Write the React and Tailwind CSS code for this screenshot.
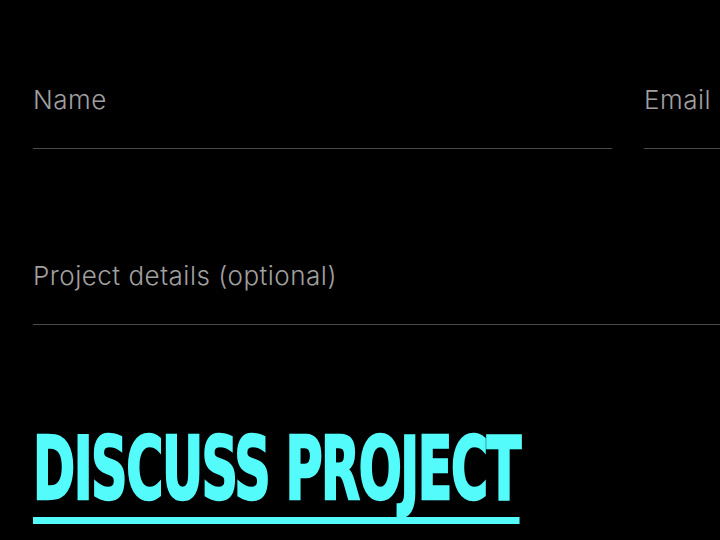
export default function App() {
  return (
    <div className="w-[720px] h-[540px] overflow-hidden bg-black" style={{ fontFamily: 'Inter, "Noto Sans", sans-serif' }}>
      <div className="w-[1223px] pl-[33px] pt-[84px]">
        <div className="grid grid-cols-2 gap-8">
          <div className="border-b border-[#4a4a4a] pb-8">
            <input
              placeholder="Name"
              className="w-full bg-transparent text-[26px] font-light leading-8 tracking-[0.5px] text-white placeholder:text-[#a0a0a0] outline-none"
            />
          </div>
          <div className="border-b border-[#4a4a4a] pb-8">
            <input
              placeholder="Email"
              className="w-full bg-transparent text-[26px] font-light leading-8 tracking-[0.5px] text-white placeholder:text-[#a0a0a0] outline-none"
            />
          </div>
        </div>
        <div className="mt-[111px] border-b border-[#4a4a4a] pb-8">
          <input
            placeholder="Project details (optional)"
            className="w-full bg-transparent text-[26px] font-light leading-8 tracking-[0.5px] text-white placeholder:text-[#a0a0a0] outline-none"
          />
        </div>
        <div className="mt-[101px]">
          <button className="inline-block origin-left scale-x-[0.647] border-b-[7px] border-[#54fbfb] pb-[4px] text-[87px] font-bold leading-none tracking-tight text-[#54fbfb] [-webkit-text-stroke:2.5px_#54fbfb]" style={{ fontFamily: '"DejaVu Sans Condensed", "DejaVu Sans", sans-serif' }}>
            DISCUSS PROJECT
          </button>
        </div>
      </div>
    </div>
  );
}
